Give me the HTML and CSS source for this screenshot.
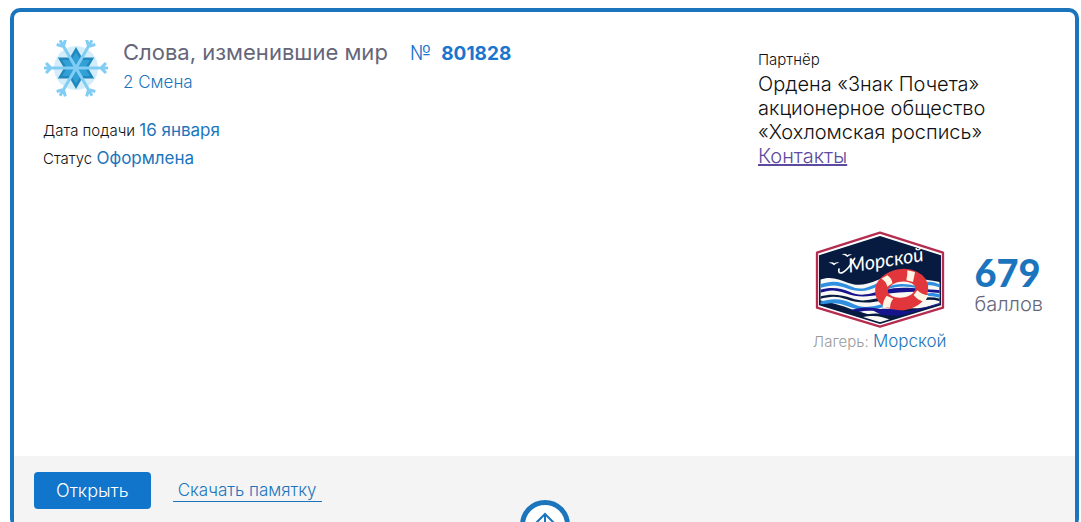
FILE: index.html
```html
<!DOCTYPE html>
<html lang="ru">

<head>
    <meta charset="utf-8">
    <title>Слова, изменившие мир</title>
    <link rel="stylesheet" href="styles.css">
</head>

<body>
    <div class="card">
        <div class="card-body">
            <div class="info">
                <div class="head">
                    <svg class="season" viewBox="0 0 66 58" aria-hidden="true">
                        <circle cx="33" cy="28" r="22" fill="#d3edfa" />
                        <path d="M33 7l6 10.600h12.200L45 28l6.200 10.400H39L33 49l-6-10.600H14.800L21 28l-6.200-10.400H27z" fill="#2188bd" />
                        <path d="M33 12l4.500 8h9.500L42 28l5 8h-9.500L33 44l-4.500-8H19l5-8-5-8h9.500z" fill="#31a0d6" />
                        <g fill="none" stroke="#82cdf4" stroke-width="3">
                            <path id="arm" d="M33 28H65M63 23l-5 5 5 5" />
                            <use href="#arm" transform="rotate(60 33 28)" />
                            <use href="#arm" transform="rotate(120 33 28)" />
                            <use href="#arm" transform="rotate(180 33 28)" />
                            <use href="#arm" transform="rotate(240 33 28)" />
                            <use href="#arm" transform="rotate(300 33 28)" />
                        </g>
                    </svg>
                    <div>
                        <div class="title-row">
                            <h1 class="title">Слова, изменившие мир</h1>
                            <div class="number">№ <b>801828</b></div>
                        </div>
                        <div class="shift">2 Смена</div>
                    </div>
                </div>
                <div class="line">Дата подачи <span class="value">16 января</span></div>
                <div class="line">Статус <span class="value">Оформлена</span></div>
            </div>
            <div class="side">
                <div class="partner">
                    <div class="partner-label">Партнёр</div>
                    <div class="partner-name">Ордена «Знак Почета» акционерное общество «Хохломская роспись»</div>
                    <a class="contacts" href="#contacts">Контакты</a>
                </div>
                <div class="result">
                    <div class="camp">
                        <svg class="camp-logo" viewBox="20 12 390 291" role="img" aria-label="Морской">
                            <defs>
                                <clipPath id="field">
                                    <path d="M215 31L394 88V231L215 286 36 231V88z" />
                                </clipPath>
                            </defs>
                            <path d="M215 17L404 77V242L215 299 26 242V77z" fill="#fff" stroke="#b52c51" stroke-width="7" stroke-linejoin="round" />
                            <path d="M215 27L398 85V235L215 291 32 235V85z" fill="#071b40" />
                            <g clip-path="url(#field)">
                                <path d="M30 160C65 145 90 157 118 167S170 175 210 158 300 150 400 166V228C370 240 330 245 300 244S230 275 180 262 80 225 30 220z" fill="#f8f8f5" />
                                <g fill="#2f8fe0">
                                    <path d="M30 174C70 158 95 163 125 177S175 185 215 164V174C180 195 150 197 115 184S65 175 30 184z" />
                                    <path d="M30 226C70 212 100 214 130 229S185 244 240 226V236C190 252 155 252 122 239S70 226 30 234z" />
                                    <path d="M235 181C265 167 295 170 325 177V183C295 177 265 176 235 188z" />
                                    <path d="M350 200C370 196 385 199 398 203V213Q370 205 350 208z" />
                                    <path d="M345 167C365 160 380 166 398 174V183C380 175 365 171 345 178z" />
                                </g>
                                <g fill="#15148c">
                                    <path d="M30 190C65 178 95 182 125 195S175 204 225 190 320 184 398 190V198C330 191 275 194 225 202S150 213 112 199 60 190 30 199z" />
                                    <path d="M105 259C155 235 190 240 230 249S300 258 398 226V236C320 272 270 268 225 257S150 253 125 264z" />
                                </g>
                                <g fill="#071b40">
                                    <path d="M30 210C65 199 100 203 130 214S180 221 230 208V218C190 229 150 230 115 217S60 209 30 217zM340 213Q370 207 398 216V224Q370 215 340 221z" />
                                    <path d="M30 239C85 235 100 250 145 252L165 259 135 270 30 246z" />
                                    <path d="M150 270C190 254 225 258 260 270S320 268 360 250L215 294z" />
                                    <path d="M340 156C365 147 380 158 398 166V156z" />
                                </g>
                                <path d="M160 271C195 262 225 268 246 279L215 288z" fill="#f8f8f5" />
                            </g>
                            <ellipse cx="280" cy="188" rx="61" ry="43" transform="rotate(-8 280 188)" fill="none" stroke="#e2363d" stroke-width="38" />
                            <g fill="#fff5e2">
                                <path d="M219 155l18-10q14 9 15 24l-15 10q-3-16-18-24z" />
                                <path d="M297 130l23 5q-3 17-6 30l-20-5q4-14 3-30z" />
                                <path d="M316 204l11-14q13 14 33 15l-10 19q-20-2-34-20z" />
                                <path d="M235 206l20 9q-9 10-10 27l-22-2q0-18 12-34z" />
                            </g>
                            <path d="M197 252C230 238 262 250 290 252L270 266 220 264z" fill="#15148c" />
                            <path d="M60 107q13-4 18 2 7-5 15-2-10 1-16 8-6-7-17-8zM100 82q13-4 17 3 6-5 14-2-9 1-14 7-6-6-17-8z" fill="#fff" />
                            <path d="M139 94Q120 128 102 137 88 141 92 126" fill="none" stroke="#fff" stroke-width="5" stroke-linecap="round" />
                            <text class="camp-script" x="123" y="137" transform="rotate(-9 123 137)">Морской</text>
                        </svg>
                        <div class="camp-name">Лагерь: <span>Морской</span></div>
                    </div>
                    <div class="score">
                        <div class="points">679</div>
                        <div class="points-label">баллов</div>
                    </div>
                </div>
            </div>
        </div>
        <div class="card-footer">
            <button class="open" type="button">Открыть</button>
            <a class="memo" href="#memo">Скачать памятку</a>
        </div>
        <button class="collapse" type="button" aria-label="Свернуть">
            <svg viewBox="0 0 24 28" aria-hidden="true">
                <path d="M12 27V2M2 12L12 2l10 10" fill="none" stroke="#1b75bc" stroke-width="2" />
            </svg>
        </button>
    </div>
</body>

</html>
```

FILE: styles.css
```css
body {
    margin: 8px 2px 0 10px;
    background: #fff;
    color: #111;
    font-family: Inter, "Noto Sans", sans-serif;
    font-weight: 300;
    overflow: hidden;
}

.card {
    position: relative;
    border: 4px solid #1b75bc;
    border-radius: 10px;
}

.card-body {
    display: flex;
    justify-content: space-between;
    min-height: 416px;
    padding: 28px 32px 0 29px;
}

.head {
    display: flex;
    gap: 14px;
    margin-bottom: 19px;
}

.season {
    width: 66px;
    height: 58px;
}

.title-row {
    display: flex;
    align-items: baseline;
    gap: 22px;
}

.title {
    margin: 0;
    color: #66667a;
    font-size: 22px;
    font-weight: 400;
    line-height: 24px;
}

.number {
    color: #1b75cc;
    font-size: 20px;
    line-height: 24px;
}

.number b {
    margin-left: 4px;
    font-size: 19px;
    font-weight: 700;
}

.shift {
    color: #1b75bc;
    font-size: 17px;
    line-height: 32px;
}

.line {
    font-size: 15px;
    line-height: 28px;
}

.value {
    color: #1b75bc;
    font-size: 17px;
    font-weight: 400;
    line-height: 20px;
}

.side {
    width: 285px;
}

.partner {
    width: 240px;
    padding-top: 8px;
    font-size: 20px;
    line-height: 24px;
}

.partner-label {
    font-size: 15px;
}

.contacts {
    color: #5c4aa0;
}

.result {
    display: flex;
    gap: 28px;
    justify-content: flex-end;
    margin-top: 63px;
}

.camp-logo {
    display: block;
    width: 130px;
    height: 97px;
    margin-left: 2px;
}

.camp-script {
    fill: #fff;
    font-family: Lato, sans-serif;
    font-size: 59px;
    font-style: italic;
    font-weight: 400;
}

.camp-name {
    color: #999;
    font-size: 15px;
    line-height: 28px;
}

.camp-name span {
    color: #1b75bc;
    font-size: 17px;
    line-height: 20px;
}

.score {
    padding-top: 20px;
}

.points {
    color: #1b75bc;
    font-family: Lato, sans-serif;
    font-size: 38px;
    font-weight: 900;
    line-height: 42px;
}

.points-label {
    color: #66667a;
    font-size: 20px;
    line-height: 22px;
}

.card-footer {
    display: flex;
    align-items: center;
    gap: 22px;
    padding: 16px 20px;
    background: #f4f4f4;
}

.open {
    padding: 8px 22px;
    border: 0;
    border-radius: 4px;
    background: #1176cb;
    color: #fff;
    font: inherit;
    font-size: 18px;
    line-height: 21px;
    cursor: pointer;
}

.memo {
    padding: 0 5px;
    border-bottom: 1px solid #1b75bc;
    color: #1b75bc;
    font-size: 17px;
    line-height: 22px;
    text-decoration: none;
}

.collapse {
    position: absolute;
    bottom: -25px;
    left: 50%;
    width: 50px;
    height: 50px;
    margin-left: -25px;
    padding: 7px;
    border: 5px solid #1b75bc;
    border-radius: 50%;
    background: #fff;
    cursor: pointer;
}

.collapse svg {
    display: block;
    width: 24px;
    height: 28px;
    margin: 0 auto;
}
```
